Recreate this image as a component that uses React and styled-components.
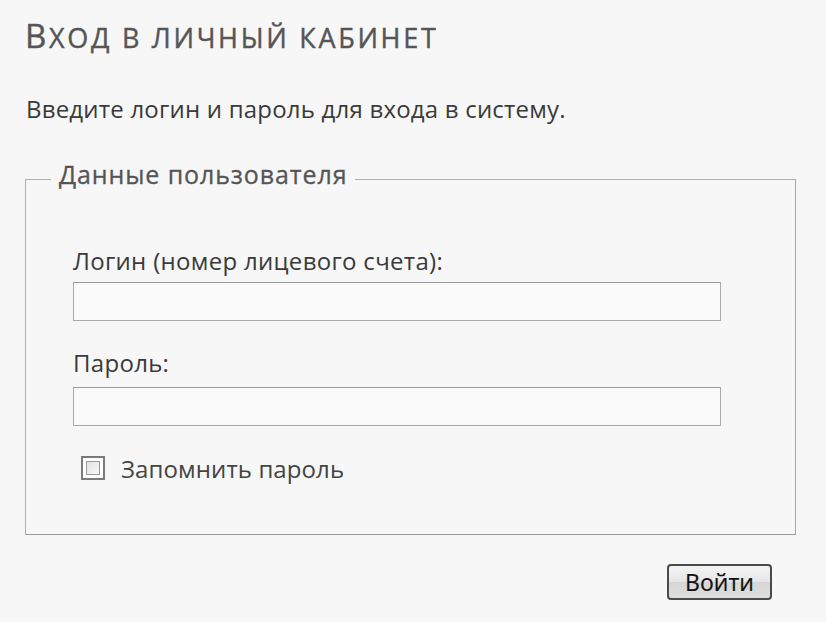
import React, { useState } from "react";
import styled, { createGlobalStyle } from "styled-components";

const GlobalStyle = createGlobalStyle`
  html, body {
    margin: 0;
    padding: 0;
    background: #f7f7f7;
  }
  body {
    font-family: "Open Sans", "DejaVu Sans", sans-serif;
    color: #333;
  }
`;

const Page = styled.div`
  width: 826px;
  height: 622px;
  box-sizing: border-box;
  padding: 19px 0 0 25px;
  overflow: hidden;
`;

const Title = styled.h1`
  margin: 0;
  font-size: 27px;
  line-height: 33px;
  font-weight: 400;
  text-transform: uppercase;
  letter-spacing: 2.7px;
  color: #555;
  -webkit-text-stroke: 0.4px #555;

  .first {
    font-size: 33px;
  }
`;

const Intro = styled.p`
  margin: 40px 0 0 1px;
  font-size: 24px;
  line-height: 30px;
  letter-spacing: 0.2px;
  color: #3a3a3a;
`;

const Fieldset = styled.fieldset`
  margin: 35px 0 0 0;
  width: 771px;
  box-sizing: border-box;
  padding: 0 0 51px 47px;
  border: 1px solid #b0b0b0;
  border-bottom-color: #999;
  border-right-color: #a6a6a6;
`;

const Legend = styled.legend`
  margin-left: -22px;
  padding: 0 8px 10px;
  font-size: 25px;
  line-height: 30px;
  letter-spacing: 0.9px;
  color: #555;
  -webkit-text-stroke: 0.3px #555;
`;

const Field = styled.div`
  margin-top: ${(p) => p.$top}px;
`;

const Label = styled.label`
  display: block;
  font-size: 24px;
  line-height: 30px;
  letter-spacing: 0.3px;
  color: #3a3a3a;
`;

const Input = styled.input`
  display: block;
  margin-top: ${(p) => p.$gap}px;
  width: 648px;
  height: 39px;
  box-sizing: border-box;
  border: 1px solid #aaa;
  border-top-color: #999;
  background: #fafafa;
  outline: none;
  font-size: 18px;
  padding: 0 6px;
`;

const CheckRow = styled.label`
  display: flex;
  align-items: center;
  gap: 16px;
  height: 30px;
  margin: 27px 0 0 8px;
  font-size: 24px;
  letter-spacing: 0.1px;
  color: #444;
  cursor: pointer;
`;

const Box = styled.span`
  width: 24px;
  height: 24px;
  box-sizing: border-box;
  border: 2px solid #7a7a7a;
  background: #fdfdfd;
  padding: 3px;
  display: flex;

  &::after {
    content: "";
    flex: 1;
    border: 1px solid #9a9a9a;
    background: ${(p) => (p.$checked ? "#666" : "linear-gradient(135deg, #e4e4e4, #f6f6f6)")};
  }
`;

const Actions = styled.div`
  width: 747px;
  display: flex;
  justify-content: flex-end;
  margin-top: 29px;
`;

const Button = styled.button`
  width: 105px;
  height: 36px;
  border: 2px solid #4a4a4a;
  border-radius: 4px;
  background: linear-gradient(#f4f4f4 0%, #e6e6e6 50%, #d6d6d6 51%, #dedede 100%);
  font-family: "Open Sans", "DejaVu Sans", sans-serif;
  font-size: 23px;
  line-height: 30px;
  color: #111;
  -webkit-text-stroke: 0.2px #111;
  padding: 0;
  cursor: pointer;
`;

export default function App() {
  const [remember, setRemember] = useState(false);

  return (
    <>
      <GlobalStyle />
      <Page>
        <Title>
          <span className="first">В</span>ход в личный кабинет
        </Title>
        <Intro>Введите логин и пароль для входа в систему.</Intro>
        <Fieldset>
          <Legend>Данные пользователя</Legend>
          <Field $top={47}>
            <Label htmlFor="login">Логин (номер лицевого счета):</Label>
            <Input id="login" type="text" $gap={6} />
          </Field>
          <Field $top={27}>
            <Label htmlFor="pass">Пароль:</Label>
            <Input id="pass" type="password" $gap={9} />
          </Field>
          <CheckRow onClick={() => setRemember(!remember)}>
            <Box $checked={remember} />
            Запомнить пароль
          </CheckRow>
        </Fieldset>
        <Actions>
          <Button type="button">Войти</Button>
        </Actions>
      </Page>
    </>
  );
}
